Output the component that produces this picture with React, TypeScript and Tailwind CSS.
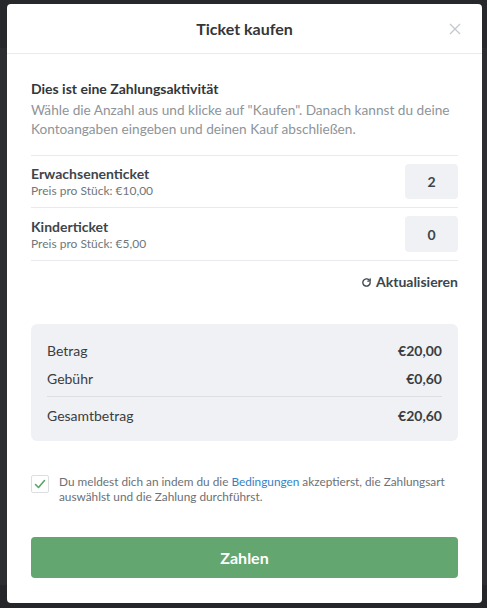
import React from "react";

function RefreshIcon() {
  return (
    <svg width="11" height="11" viewBox="0 0 24 24" fill="none" stroke="currentColor" strokeWidth="3" strokeLinecap="round" strokeLinejoin="round">
      <path d="M20 12a8 8 0 1 1-2.34-5.66" />
      <path d="M20 4v5h-5" />
    </svg>
  );
}

export default function App() {
  const font = { fontFamily: "Lato, 'Open Sans', sans-serif" };
  return (
    <div className="relative w-[487px] h-[608px] overflow-hidden bg-[#2c2d30]" style={font}>
      {/* backdrop hints */}
      <div className="absolute left-0 top-0 w-full h-[48px] bg-[#27282b]" />
      <div className="absolute left-0 top-[585px] w-full h-[23px] bg-[#252629]" />
      <div className="absolute left-[7px] top-[4px] w-[475px] h-[599px] bg-white rounded-[4px] flex flex-col">
        <div className="relative h-[50px] flex items-center justify-center border-b border-[#e8eaed]">
          <span className="text-[16px] font-bold text-[#333639]">Ticket kaufen</span>
          <svg className="absolute right-[21px] top-[19px]" width="12" height="12" viewBox="0 0 12 12" stroke="#c4c7cb" strokeWidth="1.3">
            <path d="M1 1L11 11M11 1L1 11" />
          </svg>
        </div>
        <div className="px-[24px] pt-[25px] flex flex-col">
          <div className="text-[14px] font-bold text-[#333639] leading-[20px]">Dies ist eine Zahlungsaktivität</div>
          <div className="text-[13.65px] text-[#8e9499] leading-[19px] mt-[2px]">
            Wähle die Anzahl aus und klicke auf "Kaufen". Danach kannst du deine Kontoangaben eingeben und deinen Kauf abschließen.
          </div>
          <div className="mt-[16px] border-t border-[#e8eaed]" />
          <div className="flex items-center justify-between h-[52px] border-b border-[#e8eaed]">
            <div className="flex flex-col">
              <span className="text-[14px] font-bold text-[#3c464c] leading-[18px]">Erwachsenenticket</span>
              <span className="text-[12px] text-[#6f777c] leading-[15px]">Preis pro Stück: €10,00</span>
            </div>
            <div className="w-[53px] h-[35px] rounded-[4px] bg-[#f0f1f4] flex items-center justify-center text-[14px] font-bold text-[#3c464c]">2</div>
          </div>
          <div className="flex items-center justify-between h-[53px] border-b border-[#e8eaed]">
            <div className="flex flex-col">
              <span className="text-[14px] font-bold text-[#3c464c] leading-[18px]">Kinderticket</span>
              <span className="text-[12px] text-[#6f777c] leading-[15px]">Preis pro Stück: €5,00</span>
            </div>
            <div className="w-[53px] h-[36px] rounded-[4px] bg-[#f0f1f4] flex items-center justify-center text-[14px] font-bold text-[#3c464c]">0</div>
          </div>
          <div className="flex justify-end items-center gap-[4px] mt-[12px] text-[#3c464c]">
            <RefreshIcon />
            <span className="text-[14px] font-bold leading-[18px]">Aktualisieren</span>
          </div>
          <div className="mt-[33px] rounded-[6px] bg-[#f0f1f5] px-[16px] pt-[12px] pb-[8px] text-[14px] text-[#3a3d40]">
            <div className="flex justify-between h-[28px] items-center">
              <span>Betrag</span>
              <span className="font-bold">€20,00</span>
            </div>
            <div className="flex justify-between h-[28px] items-center">
              <span>Gebühr</span>
              <span className="font-bold">€0,60</span>
            </div>
            <div className="border-t border-[#dcdee2] mt-[4px]" />
            <div className="flex justify-between h-[36px] items-center">
              <span>Gesamtbetrag</span>
              <span className="font-bold">€20,60</span>
            </div>
          </div>
          <div className="mt-[34px] flex items-start gap-[10px]">
            <div className="w-[18px] h-[18px] border border-[#dcdee2] rounded-[2px] flex items-center justify-center shrink-0">
              <svg width="12" height="10" viewBox="0 0 12 10" fill="none" stroke="#5aa368" strokeWidth="1.6" strokeLinecap="round" strokeLinejoin="round">
                <path d="M1.5 5.5L4.5 8.5L10.5 1.5" />
              </svg>
            </div>
            <p className="text-[11.8px] leading-[15px] text-[#6b7176] -mt-[1px]">
              Du meldest dich an indem du die <a className="text-[#3483c6]">Bedingungen</a> akzeptierst, die Zahlungsart auswählst und die Zahlung durchführst.
            </p>
          </div>
          <button className="mt-[33px] h-[41px] w-full rounded-[4px] bg-[#63a66f] text-white text-[16px] font-bold">Zahlen</button>
        </div>
      </div>
    </div>
  );
}
